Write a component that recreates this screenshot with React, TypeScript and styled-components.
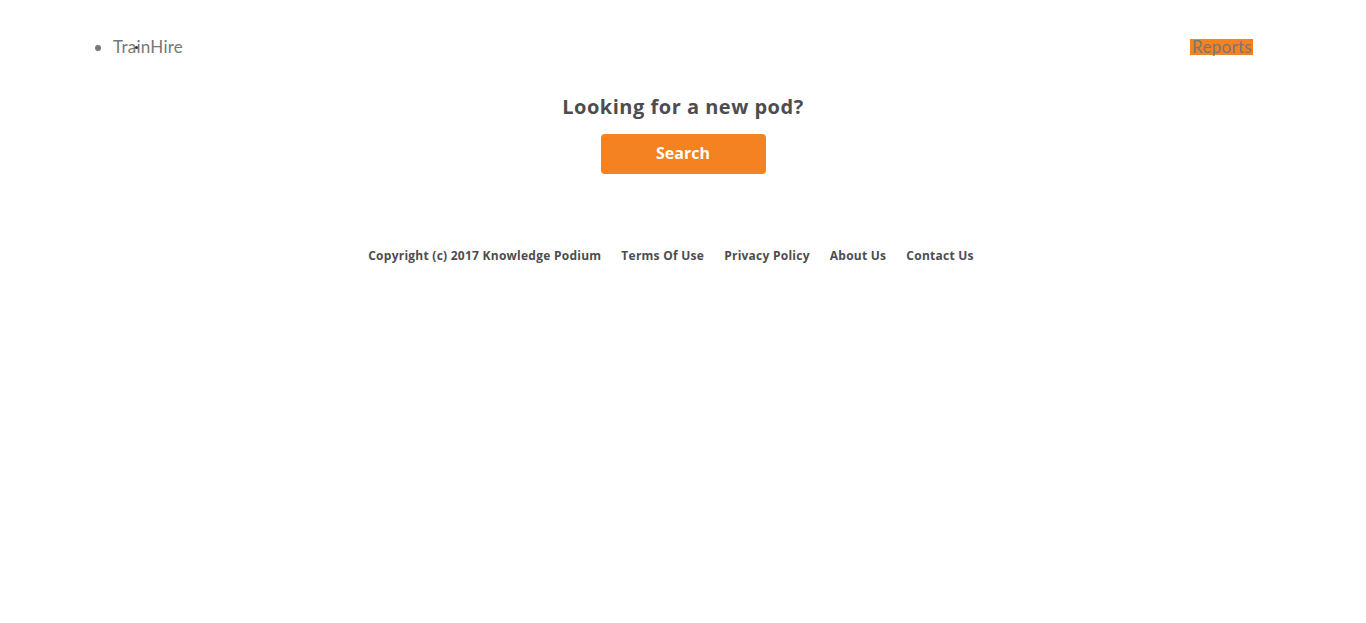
import React from "react";
import styled, { createGlobalStyle } from "styled-components";

const Global = createGlobalStyle`
  html, body { margin: 0; padding: 0; background: #fff; }
  body { font-family: Lato, "Open Sans", sans-serif; }
`;

const Page = styled.div`
  width: 1366px;
  min-height: 623px;
  background: #fff;
`;

const Header = styled.header`
  display: flex;
  justify-content: space-between;
  align-items: center;
  padding: 36px 113px 0 73px;
  height: 22px;
`;

const NavList = styled.ul`
  margin: 0;
  padding-left: 40px;
  color: #666;
  font-size: 17px;
  line-height: 22px;
`;

const BrandItem = styled.li`
  position: relative;
  color: #777;
  letter-spacing: 0.25px;
`;

const BrandDot = styled.span`
  position: absolute;
  left: 22px;
  top: 10px;
  width: 3px;
  height: 3px;
  border-radius: 50%;
  background: #333;
`;

const ReportsLink = styled.a`
  background: #f58220;
  color: #777;
  font-size: 17px;
  line-height: 16px;
  height: 16px;
  padding: 0 1px 0 2px;
  letter-spacing: 0.3px;
  text-decoration: none;
`;

const Hero = styled.section`
  display: flex;
  flex-direction: column;
  align-items: center;
  padding-top: 36px;
`;

const Heading = styled.h2`
  margin: 0;
  font-family: "Open Sans", sans-serif;
  font-weight: 700;
  font-size: 20px;
  line-height: 26px;
  color: #4d4d4f;
  letter-spacing: 0.5px;
`;

const SearchButton = styled.button`
  margin-top: 14px;
  width: 165px;
  height: 40px;
  border: none;
  border-radius: 4px;
  background: #f58220;
  color: #fff;
  font-family: "Open Sans", sans-serif;
  font-weight: 700;
  font-size: 16px;
  line-height: 38px;
  padding: 0 0 2px;
  cursor: pointer;
`;

const Footer = styled.footer`
  display: flex;
  justify-content: center;
  gap: 20px;
  margin-top: 74px;
  padding-right: 24px;
  font-family: "Open Sans", sans-serif;
  font-weight: 700;
  font-size: 12px;
  line-height: 16px;
  letter-spacing: 0.25px;
  color: #4d4d4f;
`;

const FooterLink = styled.a`
  color: #4d4d4f;
  text-decoration: none;
`;

export default function App() {
  return (
    <Page>
      <Global />
      <Header>
        <NavList>
          <BrandItem>
            TrainHire
            <BrandDot />
          </BrandItem>
        </NavList>
        <ReportsLink href="#">Reports</ReportsLink>
      </Header>
      <Hero>
        <Heading>Looking for a new pod?</Heading>
        <SearchButton>Search</SearchButton>
      </Hero>
      <Footer>
        <span>Copyright (c) 2017 Knowledge Podium</span>
        <FooterLink href="#">Terms Of Use</FooterLink>
        <FooterLink href="#">Privacy Policy</FooterLink>
        <FooterLink href="#">About Us</FooterLink>
        <FooterLink href="#">Contact Us</FooterLink>
      </Footer>
    </Page>
  );
}
